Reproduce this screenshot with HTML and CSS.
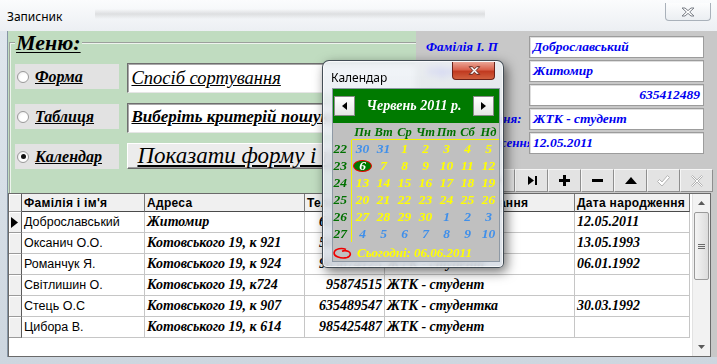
FILE: index.html
```html
<!DOCTYPE html>
<html lang="uk">
<head>
<meta charset="utf-8">
<title>Записник</title>
<link rel="stylesheet" href="styles.css">
</head>
<body>
<div class="window">
  <div class="titlebar">
    <span class="title">Записник</span>
    <span class="tb-close"><svg viewBox="0 0 44 17" width="44" height="17"><path d="M16 5 h3 l3 2.6 l3 -2.6 h3 l-4.3 4 l4.3 4 h-3 l-3 -2.6 l-3 2.6 h-3 l4.3 -4 z" fill="#fff" stroke="#7a7f87" stroke-width="1"/></svg></span>
  </div>
  <div class="frame">
    <div class="client">
      <div class="top">
        <div class="menu-area">
          <fieldset class="menu">
            <legend>Меню:</legend>
            <div class="menu-row">
              <div class="opt"><span class="radio"></span><span class="opt-text">Форма</span></div>
              <div class="textbox">Спосіб сортування</div>
            </div>
            <div class="menu-row">
              <div class="opt"><span class="radio"></span><span class="opt-text">Таблиця</span></div>
              <div class="textbox bold">Виберіть критерій пошуку</div>
            </div>
            <div class="menu-row">
              <div class="opt"><span class="radio checked"></span><span class="opt-text">Календар</span></div>
              <div class="bigbutton">Показати форму і таблицю</div>
            </div>
          </fieldset>
        </div>
        <div class="details">
          <div class="dlabel">Фамілія І. П</div><div class="dfield">Доброславський</div>
          <div class="dlabel">Адреса</div><div class="dfield">Житомир</div>
          <div class="dlabel">Телефон</div><div class="dfield num">635412489</div>
          <div class="dlabel">Місце навчання:</div><div class="dfield">ЖТК - студент</div>
          <div class="dlabel">Дата народження:</div><div class="dfield">12.05.2011</div>
        </div>
        <div class="navbar">
          <span class="navbtn"><svg width="12" height="9" viewBox="0 0 12 9"><rect x="0" y="0" width="2" height="9"/><path d="M10 0 L4 4.5 L10 9 Z"/></svg></span>
          <span class="navbtn"><svg width="7" height="9" viewBox="0 0 7 9"><path d="M6 0 L0 4.5 L6 9 Z"/></svg></span>
          <span class="navbtn"><svg width="7" height="9" viewBox="0 0 7 9"><path d="M1 0 L7 4.5 L1 9 Z"/></svg></span>
          <span class="navbtn"><svg width="12" height="9" viewBox="0 0 12 9"><path d="M2 0 L8 4.5 L2 9 Z"/><rect x="9" y="0" width="2" height="9"/></svg></span>
          <span class="navbtn"><svg width="11" height="11" viewBox="0 0 11 11"><path d="M4 0h3v4h4v3h-4v4h-3v-4h-4v-3h4z"/></svg></span>
          <span class="navbtn"><svg width="11" height="3" viewBox="0 0 11 3"><rect width="11" height="3"/></svg></span>
          <span class="navbtn"><svg width="12" height="7" viewBox="0 0 12 7"><path d="M0 7 L6 0 L12 7 Z"/></svg></span>
          <span class="navbtn"><svg width="13" height="12" viewBox="0 0 13 12"><path d="M0.5 6.5 L2.5 4.5 L5 7 L10.5 0.5 L12.5 2.5 L5 11 Z" fill="#fff" stroke="#b4b4b4"/></svg></span>
          <span class="navbtn"><svg width="12" height="12" viewBox="0 0 12 12"><path d="M0.5 1.5 L1.5 0.5 L6 5 L10.5 0.5 L11.5 1.5 L7 6 L11.5 10.5 L10.5 11.5 L6 7 L1.5 11.5 L0.5 10.5 L5 6 Z" fill="#fff" stroke="#b4b4b4"/></svg></span>
        </div>
      </div>
      <div class="grid">
        <div class="table-wrap">
          <table class="data">
            <colgroup>
              <col class="c-sel"><col class="c-name"><col class="c-addr"><col class="c-phone"><col class="c-place"><col class="c-date">
            </colgroup>
            <thead>
              <tr class="head">
                <th class="sel"></th><th>Фамілія і ім'я</th><th>Адреса</th><th>Телефон</th><th class="center">Місце навчання</th><th>Дата народження</th>
              </tr>
            </thead>
            <tbody>
              <tr><td class="sel"><svg width="7" height="11" viewBox="0 0 7 11"><path d="M0 0 L7 5.5 L0 11 Z"/></svg></td><td class="name">Доброславський</td><td class="ser">Житомир</td><td class="ser num">635412489</td><td class="ser">ЖТК - студент</td><td class="ser">12.05.2011</td></tr>
              <tr><td class="sel"></td><td class="name">Оксанич О.О.</td><td class="ser">Котовського 19, к 921</td><td class="ser num">569874123</td><td class="ser">ЖТК - студент</td><td class="ser">13.05.1993</td></tr>
              <tr><td class="sel"></td><td class="name">Романчук Я.</td><td class="ser">Котовського 19, к 924</td><td class="ser num">965874125</td><td class="ser">ЖТК - студент</td><td class="ser">06.01.1992</td></tr>
              <tr><td class="sel"></td><td class="name">Світлишин О.</td><td class="ser">Котовського 19, к724</td><td class="ser num">95874515</td><td class="ser">ЖТК - студент</td><td class="ser"></td></tr>
              <tr><td class="sel"></td><td class="name">Стець О.С</td><td class="ser">Котовського 19, к 907</td><td class="ser num">635489547</td><td class="ser">ЖТК - студентка</td><td class="ser">30.03.1992</td></tr>
              <tr><td class="sel"></td><td class="name">Цибора В.</td><td class="ser">Котовського 19, к 614</td><td class="ser num">985425487</td><td class="ser">ЖТК - студент</td><td class="ser"></td></tr>
            </tbody>
          </table>
        </div>
        <div class="scroll">
          <span class="sb-arrow"><svg width="7" height="4" viewBox="0 0 7 4"><path d="M0 4 L3.5 0 L7 4 Z"/></svg></span>
          <span class="sb-thumb"><span class="grip"></span></span>
          <span class="sb-track"></span>
          <span class="sb-arrow"><svg width="7" height="4" viewBox="0 0 7 4"><path d="M0 0 L3.5 4 L7 0 Z"/></svg></span>
        </div>
      </div>
    </div>
  </div>

  <div class="calendar">
    <div class="cal-title">
      <span class="cal-caption">Календар</span>
      <span class="cal-close"><svg width="43" height="18" viewBox="0 0 43 18"><path d="M17 4.5 h3.2 l2.3 2.3 l2.3 -2.3 h3.2 l-3.8 4 l3.8 4 h-3.2 l-2.3 -2.3 l-2.3 2.3 h-3.2 l3.8 -4 z" fill="#fff" stroke="#5a1e16" stroke-width="1"/></svg></span>
    </div>
    <div class="cal-client">
      <div class="cal-head">
        <span class="cal-nav"><svg width="5" height="8" viewBox="0 0 5 8"><path d="M5 0 L0 4 L5 8 Z"/></svg></span>
        <span class="cal-month">Червень 2011 р.</span>
        <span class="cal-nav"><svg width="5" height="8" viewBox="0 0 5 8"><path d="M0 0 L5 4 L0 8 Z"/></svg></span>
      </div>
      <div class="cal-body">
        <div class="cal-grid">
          <span class="wk-head"></span>
          <span class="wd">Пн</span><span class="wd">Вт</span><span class="wd">Ср</span><span class="wd">Чт</span><span class="wd">Пт</span><span class="wd">Сб</span><span class="wd">Нд</span>

          <span class="wk">22</span>
          <span class="d o">30</span><span class="d o">31</span><span class="d">1</span><span class="d">2</span><span class="d">3</span><span class="d">4</span><span class="d">5</span>

          <span class="wk">23</span>
          <span class="d"><span class="today">6</span></span><span class="d">7</span><span class="d">8</span><span class="d">9</span><span class="d">10</span><span class="d">11</span><span class="d">12</span>

          <span class="wk">24</span>
          <span class="d">13</span><span class="d">14</span><span class="d">15</span><span class="d">16</span><span class="d">17</span><span class="d">18</span><span class="d">19</span>

          <span class="wk">25</span>
          <span class="d">20</span><span class="d">21</span><span class="d">22</span><span class="d">23</span><span class="d">24</span><span class="d">25</span><span class="d">26</span>

          <span class="wk">26</span>
          <span class="d">27</span><span class="d">28</span><span class="d">29</span><span class="d">30</span><span class="d o">1</span><span class="d o">2</span><span class="d o">3</span>

          <span class="wk">27</span>
          <span class="d o">4</span><span class="d o">5</span><span class="d o">6</span><span class="d o">7</span><span class="d o">8</span><span class="d o">9</span><span class="d o">10</span>
        </div>
        <div class="cal-today">
          <svg width="19" height="13" viewBox="0 0 19 13"><path d="M13 2.5 C9 0.5 2 1.5 1.2 5.5 C0.5 9.5 8 12 14 10.5 C18 9.2 18.5 5.5 15 4.2 C13 3.5 10 3.8 9 4.2" fill="none" stroke="#f00000" stroke-width="1.6"/></svg>
          <span>Сьогодні: 06.06.2011</span>
        </div>
      </div>
    </div>
  </div>
</div>
</body>
</html>
```

FILE: styles.css
```css
* { box-sizing: border-box; }

body {
  margin: 0;
  width: 717px;
  height: 364px;
  overflow: hidden;
  background: #e9edf1;
  font-family: "Liberation Sans", Arial, sans-serif;
}

.window {
  position: relative;
  width: 717px;
  height: 364px;
  display: flex;
  flex-direction: column;
  background: #d8e0e8;
}

/* ---------- title bar ---------- */
.titlebar {
  height: 31px;
  flex: none;
  display: flex;
  align-items: flex-start;
  padding-left: 7px;
  background:
    linear-gradient(to bottom, rgba(140,140,140,0) 0, rgba(140,140,140,.22) 50%, rgba(140,140,140,0) 100%) 95px 9px / 390px 10px no-repeat,
    linear-gradient(#fbfcfd, #eceff3);
}

.title {
  margin-top: 8px;
  font: 12px "Noto Sans", "Liberation Sans", sans-serif;
  color: #000;
}

.tb-close {
  margin-left: auto;
  margin-right: 6px;
  margin-top: 3px;
  width: 46px;
  height: 18px;
  display: flex;
  border: 1px solid #a9b1ba;
  border-top: none;
  border-radius: 0 0 4px 4px;
  background: linear-gradient(rgba(255,255,255,.6), rgba(232,236,240,.7));
}

/* ---------- frame ---------- */
.frame {
  flex: 1;
  display: flex;
  padding: 0 0 7px 7px;
  background: linear-gradient(#dfe6ed, #cdd6df);
}

.client {
  flex: 1;
  display: flex;
  flex-direction: column;
  background: #c8c8c8;
  border-left: 1px solid #8796a6;
}

.top {
  flex: none;
  height: 162px;
  display: grid;
  grid-template-columns: 408px 1fr;
  grid-template-rows: 138px 24px;
}

/* ---------- left menu ---------- */
.menu-area {
  grid-row: 1 / 3;
  background: #c0dcc0;
}

.menu {
  margin: 0 0 0 1px;
  padding: 8px 0 0 4px;
  border: none;
  border-top: 2px groove #eef4ee;
  border-left: 2px groove #eef4ee;
  height: 100%;
  min-width: 0;
}

.menu legend {
  padding: 0 1px;
  font: italic bold 22px/24px "Liberation Serif", serif;
  text-decoration: underline;
  text-decoration-thickness: 1px;
  text-underline-offset: 2px;
  color: #000;
}

.menu-row {
  height: 40px;
  display: flex;
  align-items: flex-start;
}

.opt {
  width: 105px;
  height: 25px;
  margin-top: 1px;
  display: flex;
  align-items: center;
  background: #e2e2e2;
}

.radio {
  width: 12px;
  height: 12px;
  margin-left: 2px;
  border-radius: 50%;
  border: 1px solid #9a9a9a;
  background: radial-gradient(circle at 60% 60%, #ffffff 40%, #e4e4e4 100%);
  display: flex;
  align-items: center;
  justify-content: center;
}

.radio.checked::after {
  content: "";
  width: 5px;
  height: 5px;
  border-radius: 50%;
  background: #111;
}

.opt-text {
  margin-left: 6px;
  font: italic bold 16px "Liberation Serif", serif;
  text-decoration: underline;
  color: #000;
}

.textbox {
  margin-left: 8px;
  width: 290px;
  height: 30px;
  padding: 4px 0 0 3px;
  background: #fff;
  border: 1px solid;
  border-color: #6e6e6e #e6e6e6 #e6e6e6 #6e6e6e;
  box-shadow: inset 1px 1px 0 #a8a8a8;
  font: italic 18.5px "Liberation Serif", serif;
  text-decoration: underline;
  white-space: nowrap;
  overflow: hidden;
  color: #000;
}

.textbox.bold {
  font-weight: bold;
  font-size: 17px;
  padding-top: 3px;
}

.bigbutton {
  margin-left: 8px;
  width: 290px;
  height: 26px;
  padding: 0 0 0 9px;
  background: #ececec;
  border: 1px solid;
  border-color: #ffffff #6a6a6a #6a6a6a #ffffff;
  box-shadow: inset -1px -1px 0 #a0a0a0;
  font: italic 23px/23px "Liberation Serif", serif;
  text-decoration: underline;
  white-space: nowrap;
  overflow: hidden;
  color: #000;
}

/* ---------- right details ---------- */
.details {
  grid-column: 2;
  grid-row: 1;
  display: grid;
  grid-template-columns: 103px 175px;
  grid-auto-rows: 22px;
  row-gap: 2px;
  padding: 5px 0 0 10px;
}

.dlabel {
  display: flex;
  align-items: center;
  white-space: nowrap;
  overflow: hidden;
  font: italic bold 13px "Liberation Serif", serif;
  color: #0000f0;
}

.dfield {
  display: flex;
  align-items: center;
  padding: 0 3px;
  background: #fff;
  border: 1px solid #9c9c9c;
  box-shadow: inset 1px 1px 0 #dedede;
  font: italic bold 13.5px "Liberation Serif", serif;
  color: #0000f0;
  white-space: nowrap;
}

.dfield.num { justify-content: flex-end; }

/* ---------- navigation bar ---------- */
.navbar {
  grid-column: 2;
  grid-row: 2;
  display: flex;
  align-items: stretch;
  padding-bottom: 1px;
}

.navbtn {
  width: 33px;
  display: flex;
  align-items: center;
  justify-content: center;
  background: #e3e3e3;
  border-top: 1px solid #f6f6f6;
  border-left: 1px solid #f6f6f6;
  border-right: 1px solid #8e8e8e;
  border-bottom: 1px solid #8e8e8e;
}

.navbtn svg { fill: #000; }

/* ---------- data grid ---------- */
.grid {
  flex: 1;
  display: flex;
  margin-right: 6px;
  background: #fff;
  border: 1px solid #6a6a6a;
  min-height: 0;
}

.table-wrap {
  width: 681px;
  flex: none;
}

.data {
  width: 681px;
  table-layout: fixed;
  border-collapse: separate;
  border-spacing: 0;
}

.c-sel { width: 13px; }
.c-name { width: 123px; }
.c-addr { width: 160px; }
.c-phone { width: 80px; }
.c-place { width: 190px; }
.c-date { width: 115px; }

.data th,
.data td {
  padding: 0 2px;
  white-space: nowrap;
  overflow: hidden;
  color: #000;
}

.data tr.head { height: 18px; }
.data tbody tr { height: 21px; }

.data th {
  background: #f0f0f0;
  border-right: 1px solid #7a7a7a;
  border-bottom: 1px solid #4a4a4a;
  font: bold 12px "Liberation Sans", sans-serif;
  text-align: left;
  letter-spacing: 0.3px;
}

.data th.center { text-align: center; }

.data td {
  border-right: 1px solid #c6c6c6;
  border-bottom: 1px solid #c6c6c6;
}

.data .sel {
  padding: 0;
  background: #f0f0f0;
  border-right: 1px solid #5a5a5a;
  border-bottom: 1px solid #9a9a9a;
  box-shadow: inset 1px 1px 0 #ffffff;
  text-align: center;
}

.data .sel svg { display: block; margin-left: 2px; fill: #000; }

.data td.name {
  font: 12.5px "Liberation Sans", sans-serif;
}

.data td.ser {
  font: italic bold 14px "Liberation Serif", serif;
}

.data td.num { text-align: right; }

/* scrollbar */
.scroll {
  width: 18px;
  margin-left: 2px;
  display: flex;
  flex-direction: column;
  background: #f2f2f2;
  border-left: 1px solid #e2e2e2;
}

.sb-arrow {
  height: 18px;
  display: flex;
  align-items: center;
  justify-content: center;
}

.sb-arrow svg { fill: #5a5a5a; }

.sb-thumb {
  height: 68px;
  margin: 0 1px;
  border: 1px solid #9a9a9a;
  border-radius: 2px;
  background: linear-gradient(to right, #f4f4f4, #dcdcdc);
  display: flex;
  align-items: center;
  justify-content: center;
}

.grip {
  width: 7px;
  height: 5px;
  border-top: 1px solid #6a6a6a;
  border-bottom: 1px solid #6a6a6a;
  background: linear-gradient(#6a6a6a, #6a6a6a) 0 1px / 7px 1px no-repeat;
}

.sb-track { flex: 1; }

/* ---------- calendar popup ---------- */
.calendar {
  position: absolute;
  left: 322px;
  top: 60px;
  width: 182px;
  height: 208px;
  display: flex;
  flex-direction: column;
  padding: 0 4px 6px 10px;
  border: 1px solid rgba(40, 50, 60, .85);
  border-radius: 7px 7px 5px 5px;
  background: linear-gradient(rgba(238, 242, 246, .85), rgba(214, 220, 228, .88));
  backdrop-filter: blur(3px);
  box-shadow: inset 0 0 0 1px rgba(255, 255, 255, .7), 3px 4px 12px rgba(0, 0, 0, .55);
}

.cal-title {
  height: 28px;
  flex: none;
  display: flex;
  align-items: flex-start;
  margin: 0 -4px 0 -10px;
  padding-left: 8px;
}

.cal-caption {
  margin-top: 8px;
  font: 12px "Noto Sans", "Liberation Sans", sans-serif;
  color: #000;
}

.cal-close {
  margin-left: auto;
  margin-right: 8px;
  margin-top: 1px;
  width: 43px;
  height: 18px;
  display: flex;
  border: 1px solid #6b2219;
  border-top: none;
  border-radius: 0 0 4px 4px;
  background: linear-gradient(#eaa596 0%, #d9624c 45%, #c13a20 55%, #d0603f 100%);
  overflow: hidden;
}

.cal-client {
  flex: 1;
  display: flex;
  flex-direction: column;
  background: #c0c0c0;
  box-shadow: 0 0 0 1px #8e99a5;
}

.cal-head {
  height: 34px;
  flex: none;
  display: flex;
  align-items: center;
  justify-content: space-between;
  padding: 0 5px 0 1px;
  background: #007a00;
}

.cal-nav {
  width: 21px;
  height: 20px;
  display: flex;
  align-items: center;
  justify-content: center;
  background: linear-gradient(#ffffff, #e6e6e6);
  border: 1px solid #8a8a8a;
}

.cal-nav svg { fill: #000; }

.cal-month {
  font: italic bold 14px "Liberation Serif", serif;
  color: #fff;
}

.cal-body {
  flex: 1;
  padding-top: 2px;
  display: flex;
  flex-direction: column;
}

.cal-grid {
  display: grid;
  grid-template-columns: 19px repeat(7, 21px);
  grid-template-rows: 15px repeat(6, 17px);
  font: italic bold 13.5px "Liberation Serif", serif;
}

.wd {
  text-align: center;
  line-height: 14px;
  font-size: 12.5px;
  color: #007000;
  border-bottom: 1px solid #f4f400;
}

.wk {
  text-align: right;
  padding-right: 4px;
  line-height: 17px;
  color: #007000;
  border-right: 1px solid #f4f400;
}

.d {
  display: flex;
  align-items: center;
  justify-content: center;
  line-height: 15px;
  color: #ffff00;
}

.d.o { color: #3f8fea; }

.today {
  width: 19px;
  height: 12px;
  display: flex;
  align-items: center;
  justify-content: center;
  border-radius: 50%;
  background: #007a00;
  border: 1.5px solid #f00000;
  color: #fff;
  line-height: 10px;
}

.cal-today {
  margin-top: 3px;
  height: 16px;
  display: flex;
  align-items: center;
  gap: 5px;
  font: italic bold 13px "Liberation Serif", serif;
  color: #ffff00;
}
```
